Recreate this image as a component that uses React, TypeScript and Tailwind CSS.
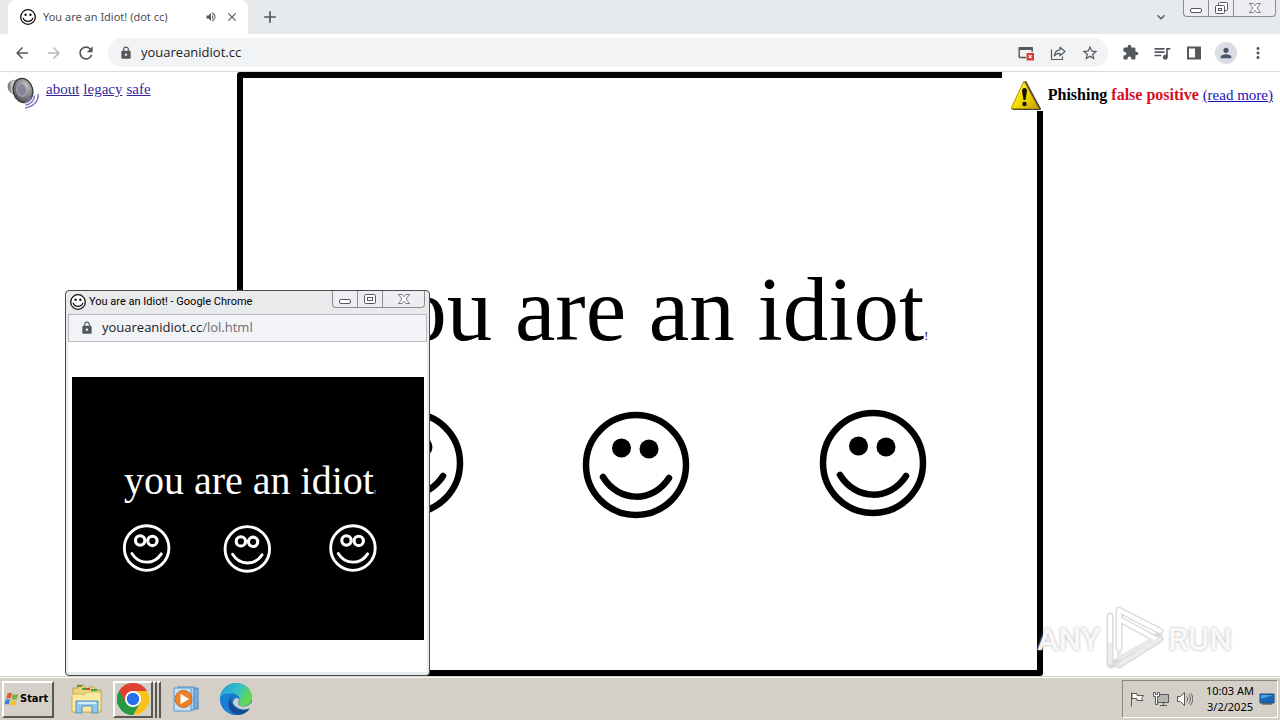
import type { ReactNode } from 'react';
import {
  MdAdd,
  MdArrowBack,
  MdArrowForward,
  MdClose,
  MdExtension,
  MdKeyboardArrowDown,
  MdLock,
  MdMoreVert,
  MdPerson,
  MdQueueMusic,
  MdRefresh,
  MdStarBorder,
  MdVolumeUp,
} from 'react-icons/md';

const pageLinks = ['about', 'legacy', 'safe'];

const faces = [
  { x: 53, y: 54 },
  { x: 279, y: 56 },
  { x: 516, y: 54 },
];

function IconButton({ label, children }: { label: string; children: ReactNode }) {
  return (
    <button aria-label={label} className="flex h-7 w-8 shrink-0 items-center justify-center text-[#54585d]">
      {children}
    </button>
  );
}

function Favicon() {
  return (
    <svg viewBox="0 0 18 18" className="size-[18px] shrink-0" fill="none" stroke="#111">
      <circle cx="9" cy="9" r="7.3" fill="#fff" strokeWidth="1.3" />
      <circle cx="6.6" cy="6.8" r="1.2" fill="#111" stroke="none" />
      <circle cx="11.4" cy="6.8" r="1.2" fill="#111" stroke="none" />
      <path d="M4.2 10.2c1.6 4.2 8 4.2 9.6 0" strokeWidth="1.2" strokeLinecap="round" />
    </svg>
  );
}

function Faces({ hollow, className }: { hollow?: boolean; className: string }) {
  return (
    <svg viewBox="0 0 570 110" className={className} fill="none" stroke="currentColor" strokeWidth="6.5">
      {faces.map((f) => (
        <g key={f.x} transform={`translate(${f.x} ${f.y})`}>
          <circle r="50" />
          <circle cx="-14.5" cy="-17" r={hollow ? 10.5 : 9.5} fill={hollow ? 'none' : 'currentColor'} strokeWidth={hollow ? 7 : 0} />
          <circle cx="13" cy="-16" r={hollow ? 10.5 : 9.5} fill={hollow ? 'none' : 'currentColor'} strokeWidth={hollow ? 7 : 0} />
          <path d="M-33 12C-17 38 17 38 33 13" strokeLinecap="round" />
        </g>
      ))}
    </svg>
  );
}

function WindowControls({ restore }: { restore?: boolean }) {
  return (
    <div className="flex h-[17px] overflow-hidden rounded-b border border-t-0 border-[#8b8d93] bg-[#eceef1]">
      <button aria-label="Minimize" className="flex w-[25px] items-center justify-center border-r border-[#8b8d93]">
        <svg viewBox="0 0 24 16" className="h-4 w-6" fill="#fff" stroke="#55585e">
          <rect x="6.5" y="8.5" width="11" height="4" rx="1.5" />
        </svg>
      </button>
      <button aria-label="Maximize" className="flex w-[25px] items-center justify-center border-r border-[#8b8d93]">
        {restore ? (
          <svg viewBox="0 0 24 16" className="h-4 w-6" fill="#fff" stroke="#55585e">
            <rect x="9.5" y="2.5" width="9" height="8" rx="1" />
            <rect x="6.5" y="5.5" width="9" height="8" rx="1" />
            <rect x="9.5" y="8.5" width="3" height="2" />
          </svg>
        ) : (
          <svg viewBox="0 0 24 16" className="h-4 w-6" fill="#fff" stroke="#55585e">
            <rect x="6.5" y="3.5" width="11" height="9" rx="1" />
            <rect x="9.5" y="6.5" width="5" height="3" />
          </svg>
        )}
      </button>
      <button aria-label="Close" className="flex w-[41px] items-center justify-center">
        <svg viewBox="0 0 24 16" className="h-4 w-6" fill="#fff" stroke="#6b6e74" strokeWidth="0.9">
          <path d="M6.5 3.5h3.6L12 5.8l1.9-2.3h3.6L14 8l3.5 4.5h-3.6L12 10.200l-1.900 2.300H6.500L10 8z" />
        </svg>
      </button>
    </div>
  );
}

function TabStrip() {
  return (
    <header className="flex h-[34px] items-start bg-[#e7eaed] pl-2 pr-1">
      <div className="flex h-full w-60 items-center rounded-t-lg bg-white pl-[11px] pr-[9px]">
        <Favicon />
        <span className="ml-[6px] flex-1 whitespace-nowrap font-['Noto_Sans',sans-serif] text-[11px] text-[#4d5156]">
          You are an Idiot! (dot cc)
        </span>
        <MdVolumeUp className="size-3 text-[#54585d]" />
        <button aria-label="Close tab" className="ml-2 text-[#54585d]">
          <MdClose className="size-[14px]" />
        </button>
      </div>
      <button aria-label="New tab" className="ml-3 flex h-full items-center text-[#54585d]">
        <MdAdd className="size-5" />
      </button>
      <button aria-label="Search tabs" className="ml-auto mr-[14px] flex h-full items-center text-[#54585d]">
        <MdKeyboardArrowDown className="size-4" />
      </button>
      <WindowControls restore />
    </header>
  );
}

function Toolbar() {
  return (
    <nav className="flex h-[38px] items-center border-b border-[#d9dbde] bg-white px-[6px]">
      <IconButton label="Back"><MdArrowBack className="size-[18px]" /></IconButton>
      <IconButton label="Forward"><MdArrowForward className="size-[18px] text-[#b6b8bb]" /></IconButton>
      <IconButton label="Reload"><MdRefresh className="size-5" /></IconButton>
      <div className="mx-[6px] flex h-[29px] flex-1 items-center rounded-full bg-[#f1f3f4] pl-[11px] pr-[2px]">
        <MdLock className="size-[14px] text-[#54585d]" />
        <input
          aria-label="Address"
          defaultValue="youareanidiot.cc"
          className="ml-2 min-w-0 flex-1 bg-transparent font-['Open_Sans',sans-serif] text-[13px] text-[#202124] outline-none"
        />
        <IconButton label="Pop-up blocked">
          <svg viewBox="0 0 16 16" className="size-4" fill="none">
            <path d="M8 12.500H2.200a1 1 0 0 1-1-1V3h13v4" stroke="#54585d" strokeWidth="1.400" />
            <path d="M1 2h13.500v3H1z" fill="#54585d" />
            <path d="M8.500 8H16v7.500H8.500z" fill="#d93a32" />
            <path d="m10.700 10.200 3 3m0-3-3 3" stroke="#fff" strokeWidth="1.100" />
          </svg>
        </IconButton>
        <IconButton label="Share">
          <svg viewBox="0 0 16 16" className="size-4" fill="none" stroke="#54585d" strokeWidth="1.200">
            <path d="M1.500 4.500v10h11v-3" />
            <path d="M10 2.200 15 6.500l-5 4.300V8.300c-2.800 0-4.600.900-5.700 2.700.300-3.300 2.200-5.700 5.700-6.200z" strokeLinejoin="round" />
          </svg>
        </IconButton>
        <IconButton label="Bookmark"><MdStarBorder className="size-[18px]" /></IconButton>
      </div>
      <IconButton label="Extensions"><MdExtension className="size-[17px]" /></IconButton>
      <IconButton label="Media"><MdQueueMusic className="size-5" /></IconButton>
      <IconButton label="Side panel">
        <svg viewBox="0 0 16 16" className="size-4">
          <path d="M1 1.500h14v13H1zM3 3.500v9h6v-9z" fill="currentColor" fillRule="evenodd" />
        </svg>
      </IconButton>
      <IconButton label="Profile">
        <span className="flex size-[22px] items-center justify-center rounded-full bg-[#dadde3]">
          <MdPerson className="size-4 text-[#48546b]" />
        </span>
      </IconButton>
      <IconButton label="Menu"><MdMoreVert className="size-[18px]" /></IconButton>
    </nav>
  );
}

function Speaker() {
  return (
    <svg viewBox="0 0 34 34" className="size-[34px] shrink-0">
      <defs>
        <radialGradient id="cone" cx="0.65" cy="0.35" r="0.7">
          <stop offset="0" stopColor="#c9c9c6" />
          <stop offset="0.6" stopColor="#84848a" />
          <stop offset="1" stopColor="#4d4d52" />
        </radialGradient>
        <linearGradient id="magnet">
          <stop offset="0" stopColor="#666" />
          <stop offset="0.4" stopColor="#e2e2e2" />
          <stop offset="1" stopColor="#666" />
        </linearGradient>
      </defs>
      <path d="M2 10c0-3 2-5 4-5l9-2-3 19-6-5c-3-1-4-4-4-7z" fill="url(#magnet)" stroke="#777" strokeWidth="0.700" />
      <ellipse cx="17" cy="14.500" rx="9.800" ry="12.200" transform="rotate(-14 17 14.500)" fill="url(#cone)" stroke="#37373a" strokeWidth="1.300" />
      <ellipse cx="15.500" cy="14" rx="4.800" ry="6.200" transform="rotate(-14 15.500 14)" fill="#85859a" stroke="#a5a5ae" />
      <g fill="none" stroke="#7d78c0" strokeWidth="1.500">
        <path d="M25 21c-1 3-3 5-6 5.500" />
        <path d="M28.500 19.500c0 5-4 9-9 9.500" />
        <path d="M32 18c1 7-5 13-13 14" />
      </g>
    </svg>
  );
}

function PhishingNotice() {
  return (
    <aside className="absolute right-0 top-0 flex h-[39px] items-center bg-white pl-[6px] pr-[7px] pt-[7px] text-[15px]">
      <svg viewBox="0 0 34 34" className="size-[34px]">
        <defs>
          <linearGradient id="caution" x2="1" y2="1">
            <stop offset="0" stopColor="#fff36a" />
            <stop offset="0.5" stopColor="#f6df00" />
            <stop offset="1" stopColor="#c99f00" />
          </linearGradient>
        </defs>
        <path d="M17.500 4 32 31H5z" fill="#444" stroke="#444" strokeWidth="2" strokeLinejoin="round" />
        <path d="M16 3 30.500 30.500H3z" fill="url(#caution)" stroke="#b59700" strokeLinejoin="round" />
        <path d="M14 13c0-4 5-4 5 0l-1.500 9h-2z" fill="#111" />
        <circle cx="16.500" cy="26" r="2.200" fill="#111" />
      </svg>
      <p className="ml-[6px] whitespace-nowrap leading-4">
        <b className="text-base leading-4">
          Phishing <span className="text-[#d4101c]">false positive</span>
        </b>{' '}
        <a href="#more" className="text-[#1a12b8] underline">(read more)</a>
      </p>
    </aside>
  );
}

function PopupWindow() {
  return (
    <section className="absolute left-[65px] top-[218px] flex h-[386px] w-[365px] flex-col rounded-[4px] border border-[#4b4c50] bg-[#e9eaec] px-[2px] pb-[3px]">
      <div className="flex h-[23px] items-start pl-[1px] pr-[2px]">
        <div className="flex h-[22px] flex-1 items-center">
          <Favicon />
          <h2 className="ml-[2px] whitespace-nowrap font-['Roboto',sans-serif] text-[11px] text-black">
            You are an Idiot! - Google Chrome
          </h2>
        </div>
        <WindowControls />
      </div>
      <div className="flex h-7 items-center border border-[#b7babd] bg-[#f1f3f6] pl-[11px]">
        <MdLock className="size-[14px] text-[#54585d]" />
        <p className="ml-2 font-['Open_Sans',sans-serif] text-[13px] text-[#202124]">
          youareanidiot.cc<span className="text-[#6b6f74]">/lol.html</span>
        </p>
      </div>
      <div className="flex flex-1 flex-col bg-white pb-8 pl-1 pr-[3px] pt-[35px]">
        <div className="flex flex-1 flex-col items-center bg-black pl-1 pt-20 text-white">
          <p className="whitespace-nowrap text-[40px] leading-[48px]">
            you are an idiot<span className="text-[6px]">!</span>
          </p>
          <Faces hollow className="mt-2 w-[254px]" />
        </div>
      </div>
    </section>
  );
}

function Watermark() {
  return (
    <div className="absolute bottom-1 right-12 flex items-center font-['Roboto',sans-serif] text-[32px] font-medium leading-[60px] text-white/90 [text-shadow:0_0_3px_#aaa]">
      <span>ANY</span>
      <svg viewBox="0 0 60 66" className="mx-1 h-[66px] w-[60px]" fill="none" strokeLinejoin="round" strokeLinecap="round">
        <path d="M15 42V4l41 21-4 8-37-20M6 10v48M15 59l41-26M7 59l8-4" stroke="#dcdcdc" strokeWidth="7" />
        <path d="M15 44v8l34-19" stroke="#e8e8e8" strokeWidth="4" />
        <path d="M15 42V4l41 21M15 13l37 20M6 10v26" stroke="#fff" strokeWidth="4" />
        <path d="M6 38v18M15 59l41-26" stroke="#ececec" strokeWidth="4" />
      </svg>
      <span>RUN</span>
    </div>
  );
}

function WindowsFlag() {
  return (
    <svg viewBox="0 0 18 18" className="size-4 shrink-0">
      <path d="M4 3c2-1.500 4-1 5 0L7.500 8.500c-1.500-1-3-1-5 0z" fill="#e8572a" />
      <path d="M10 3.500c2 1 4 .800 6-.500l-1.500 6c-2 1-4 1-6 0z" fill="#6fb43f" />
      <path d="M2 9.700c2-1 3.500-1 5 0l-1.500 5.600c-1.500-1-3-1-5 0z" fill="#3a8ad8" />
      <path d="M8 10.200c2 1 4 1 6 0l-1.500 5.500c-2 1-4 1-6 0z" fill="#f7c02b" />
    </svg>
  );
}

function Taskbar() {
  return (
    <footer className="flex h-11 shrink-0 items-start border-t border-[#d4d0c8] bg-[#d4d0c8] font-['Noto_Sans',sans-serif] text-[11px] text-black">
      <div className="flex h-full w-full items-center border-t border-white px-[2px]">
        <button className="flex h-[37px] w-[52px] items-center border-2 border-b-[#5a5854] border-l-white border-r-[#5a5854] border-t-white font-['DejaVu_Sans_Condensed','DejaVu_Sans',sans-serif] font-bold">
          <WindowsFlag />
          Start
        </button>
        <button aria-label="Explorer" className="ml-[17px]">
          <svg viewBox="0 0 32 32" className="size-8">
            <path d="M2 5h5V2h6l1 3 4 1V4h5l2 3h5v22H2z" fill="#edd479" stroke="#c0a249" />
            <path d="M6 3h5M11 6h5M20 7h6" stroke="#44a04b" strokeWidth="2" />
            <path d="M15 6h4" stroke="#d54a35" strokeWidth="2" />
            <path d="M1 11h13l2-2h14v20H1z" fill="#fae99e" stroke="#cbb25a" />
            <path d="M5 30V18h22v12h-6v-7H11v7z" fill="#91c8ec" stroke="#4d93c6" />
            <path d="M7 20h18" stroke="#d9effb" strokeWidth="2" />
          </svg>
        </button>
        <div className="ml-[10px] flex">
          <button aria-label="Chrome" className="flex h-[37px] w-10 items-center justify-center border-2 border-b-[#5a5854] border-l-white border-r-[#5a5854] border-t-white">
            <svg viewBox="0 0 32 32" className="size-8">
              <path d="M16 16 2.140 8A16 16 0 0 1 29.860 8H16z" fill="#df4032" />
              <path d="M16 16h-.01L29.860 8A16 16 0 0 1 16 32l6.900-12z" fill="#fbc116" />
              <path d="M16 16 22.900 20 16 32A16 16 0 0 1 2.140 8z" fill="#279847" />
              <path d="M16 8h13.860L22 20 16 16z" fill="#fbc116" />
              <path d="M16 8H2.140L9 20l7-4z" fill="#df4032" />
              <path d="M2.140 8 9.070 20A8 8 0 0 0 22.900 20L16 32A16 16 0 0 1 2.140 8z" fill="#279847" />
              <circle cx="16" cy="16" r="8" fill="#fff" />
              <circle cx="16" cy="16" r="6.200" fill="#2671e8" />
            </svg>
          </button>
          <span className="w-1 border-r-2 border-t-2 border-r-[#5a5854] border-t-white" />
          <span className="w-1 border-r-2 border-t-2 border-r-[#5a5854] border-t-white" />
        </div>
        <button aria-label="Media Player" className="ml-[11px]">
          <svg viewBox="0 0 30 30" className="size-[30px]">
            <path d="M11 4h15v21H11z" fill="#79aee0" stroke="#4c86bd" />
            <path d="M6 3h16v23H6z" fill="#a7d0f0" stroke="#4c86bd" />
            <path d="M2 4h17v23H2z" fill="#c6e2f6" stroke="#5d98c9" />
            <circle cx="11.500" cy="15" r="8.500" fill="#f08127" stroke="#d4651a" />
            <path d="M8.500 9.800 17 15l-8.500 5.200z" fill="#fff" />
          </svg>
        </button>
        <button aria-label="Edge" className="ml-[18px]">
          <svg viewBox="0 0 32 32" className="size-8">
            <defs>
              <linearGradient id="wave" x2="1" y2="0.400">
                <stop offset="0" stopColor="#1f9de0" />
                <stop offset="0.600" stopColor="#35c1c8" />
                <stop offset="1" stopColor="#66d84b" />
              </linearGradient>
            </defs>
            <circle cx="16" cy="16" r="16" fill="#1b76cf" />
            <path d="M0 15C1 6 8 0 16 0c9 0 16 6 16 14 0 6-4 9-8.500 9-4 0-5.500-1.500-5.500-3 0-1 1.500-1.500 1.500-4 0-3-3.500-5.500-8-5.500C6 10.500 1 13 0 15z" fill="url(#wave)" />
            <path d="M11 13c-5 7-1 17 9 18.500C11 34 1 27 0 16c1-4 5-6 11-5z" fill="#1681d4" />
            <path d="M11.500 13.500C9 20 15 27 23 27c3 0 5-.700 7-1.800-3 5-9 7.300-13 6.600C8 29 6 19 11.500 13.500z" fill="#174c94" />
            <path d="M18 20c0 2 2 3.500 5.500 3.500 3 0 5.500-1 7.500-3.500l1.500 1.500L30 25c-6 3-14 1-17-5 0-2 1-4 3-5 2 0 3.500 1 3 2.500C18.500 18.500 18 19 18 20z" fill="#d4d0c8" />
          </svg>
        </button>
        <div className="ml-auto flex h-[38px] items-center border border-b-white border-l-[#8a8782] border-r-white border-t-[#8a8782] pl-[6px] pr-[2px]">
          <div className="flex gap-2">
            <svg viewBox="0 0 16 16" className="size-4" fill="#fff" stroke="#595959">
              <path d="M2.500 1.500v14" />
              <path d="M3 2.500h5v2h6.500l-2 3 1.500 2H8v-2H3z" />
            </svg>
            <svg viewBox="0 0 16 16" className="size-4" fill="#fff" stroke="#595959">
              <path d="M4.500 3.500h11v8h-11z" fill="#b5b5b5" />
              <path d="M7 14.500h7M10.500 12v2" />
              <path d="M.5 1.500v4h2v8h2v-8h2v-4h-2v2h-2v-2z" />
            </svg>
            <svg viewBox="0 0 16 16" className="size-4" fill="none" stroke="#595959">
              <path d="M.5 5.500h3l4-4v13l-4-4h-3z" fill="#fff" />
              <path d="M9.500 5.500c1.500 1.500 1.500 3.500 0 5M11.500 3.500c2.500 2.500 2.500 6.500 0 9M13.500 2c3 3.500 3 8.500 0 12" />
            </svg>
          </div>
          <time className="ml-3 w-[50px] whitespace-nowrap text-center leading-4">
            10:03 AM
            <br />
            3/2/2025
          </time>
          <svg viewBox="0 0 16 16" className="ml-1 size-4">
            <path d="M1 3h14v9H1z" fill="#1766b8" stroke="#204a78" />
            <path d="M2 4h12L2 8z" fill="#4da3ea" />
            <path d="M3 13h10" stroke="#333" />
          </svg>
        </div>
      </div>
    </footer>
  );
}

export default function App() {
  return (
    <div className="flex min-h-screen flex-col bg-white font-['Liberation_Serif',serif] text-black">
      <TabStrip />
      <Toolbar />
      <main className="relative grid flex-1 grid-cols-[minmax(0,1fr)_63%_minmax(0,1fr)]">
        <div className="flex items-start pl-[6px] pt-1">
          <Speaker />
          <p className="ml-[6px] flex gap-1 whitespace-nowrap text-[15px] leading-[26px]">
            {pageLinks.map((link) => (
              <a key={link} href={`#${link}`} className="text-[#33289e] underline">
                {link}
              </a>
            ))}
          </p>
        </div>
        <div className="flex flex-col items-center rounded-[3px] border-[6px] border-black pl-1 pt-[180px]">
          <h1 className="whitespace-nowrap text-[91px] leading-[104px]">
            you are an idiot<span className="text-[12px]">!</span>
          </h1>
          <Faces className="mt-[21px] w-[570px]" />
        </div>
        <PhishingNotice />
        <PopupWindow />
        <Watermark />
      </main>
      <Taskbar />
    </div>
  );
}
